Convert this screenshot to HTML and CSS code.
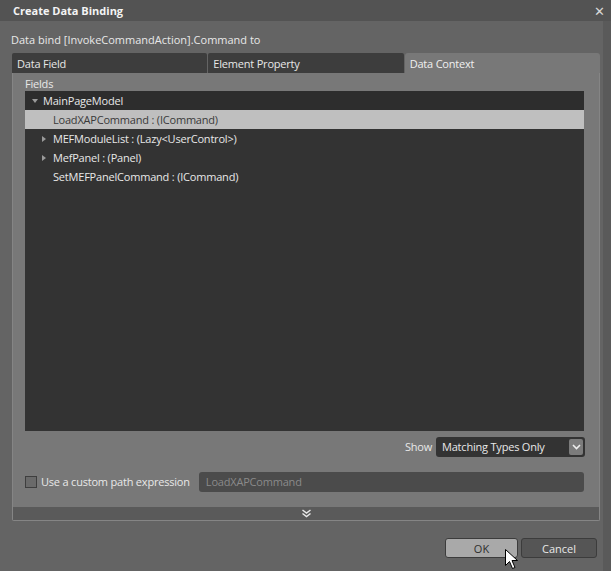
FILE: index.html
```html
<!DOCTYPE html>
<html lang="en">
<head>
    <meta charset="UTF-8">
    <title>Create Data Binding</title>
    <link rel="stylesheet" href="styles.css">
</head>
<body>
    <div class="window">
        <header class="titlebar">
            <span class="title">Create Data Binding</span>
            <span class="close">&#x2715;</span>
        </header>
        <div class="content">
            <p class="caption">Data bind [InvokeCommandAction].Command to</p>
            <div class="tabs">
                <div class="tab">Data Field</div>
                <div class="tab">Element Property</div>
                <div class="tab active">Data Context</div>
            </div>
            <div class="panel">
                <div class="panel-body">
                    <div class="fields-label">Fields</div>
                    <div class="tree">
                        <div class="row root"><span class="arrow down"></span>MainPageModel</div>
                        <div class="row child selected"><span class="arrow none"></span>LoadXAPCommand : (ICommand)</div>
                        <div class="row child"><span class="arrow right"></span>MEFModuleList : (Lazy&lt;UserControl&gt;)</div>
                        <div class="row child"><span class="arrow right"></span>MefPanel : (Panel)</div>
                        <div class="row child"><span class="arrow none"></span>SetMEFPanelCommand : (ICommand)</div>
                    </div>
                    <div class="show-row">
                        <span class="show-label">Show</span>
                        <div class="select">
                            <span>Matching Types Only</span>
                            <span class="select-btn">
                                <svg width="9" height="6" viewBox="0 0 9 6"><path d="M1 1 L4.5 4.5 L8 1" fill="none" stroke="#eee" stroke-width="1.6"/></svg>
                            </span>
                        </div>
                    </div>
                    <div class="path-row">
                        <span class="checkbox"></span>
                        <span class="path-label">Use a custom path expression</span>
                        <div class="path-input">LoadXAPCommand</div>
                    </div>
                </div>
                <div class="expander">
                    <svg width="11" height="9" viewBox="0 0 11 9"><path d="M1.5 1 L5.5 4 L9.5 1 M1.5 4.5 L5.5 7.5 L9.5 4.5" fill="none" stroke="#e8e8e8" stroke-width="1.5"/></svg>
                </div>
            </div>
            <div class="buttons">
                <button class="btn ok">OK</button>
                <button class="btn cancel">Cancel</button>
                <svg class="cursor" width="13" height="21" viewBox="0 0 13 21"><path d="M0.5 0.5 L0.5 16.5 L4.5 12.5 L7.5 19.5 L10 18.5 L7 11.5 L12.5 11.5 Z" fill="#fff" stroke="#000" stroke-width="1"/></svg>
            </div>
        </div>
    </div>
</body>
</html>
```

FILE: styles.css
```css
* {
    box-sizing: border-box;
    margin: 0;
    padding: 0;
}

body {
    font-family: "Open Sans", "Noto Sans", sans-serif;
    font-size: 11px;
    letter-spacing: -0.2px;
    background-color: #646464;
    color: #e8e8e8;
    width: 611px;
    height: 571px;
    overflow: hidden;
}

.window {
    height: 571px;
}

.titlebar {
    height: 21px;
    background-color: #535353;
    display: flex;
    align-items: center;
    justify-content: space-between;
    padding: 0 6px 0 13px;
}

.title {
    font-weight: bold;
    font-size: 11px;
    letter-spacing: 0;
    color: #f4f4f4;
}

.close {
    font-size: 13px;
    color: #d8d8d8;
}

.content {
    padding: 11px 3px 0 12px;
    height: 550px;
    border-right: 8px solid #5a5a5a;
}

.caption {
    height: 21px;
    margin-left: -1px;
    line-height: 16px;
    letter-spacing: 0;
}

.tabs {
    display: flex;
    gap: 1px;
    height: 20px;
}

.tab {
    flex: 1;
    background-color: #3d3d3d;
    padding: 0 5px;
    line-height: 21px;
    border-radius: 2px 2px 0 0;
}

.tab.active {
    background-color: #787878;
    color: #f0f0f0;
    border-radius: 3px 3px 0 0;
}

.panel {
    background-color: #787878;
    border: 1px solid #858585;
    border-top: none;
    border-radius: 0 0 2px 2px;
    height: 448px;
    display: flex;
    flex-direction: column;
}

.panel-body {
    flex: 1;
    padding: 3px 15px 0 12px;
}

.fields-label {
    height: 15px;
    line-height: 15px;
}

.tree {
    background-color: #333333;
    height: 340px;
}

.row {
    height: 19px;
    line-height: 19px;
    display: flex;
    align-items: center;
    white-space: nowrap;
}

.row.root {
    background-color: #2d2d2d;
    padding-left: 6px;
}

.row.child {
    padding-left: 16px;
}

.row.selected {
    background-color: #bfbfbf;
    color: #3a3a3a;
}

.arrow {
    width: 12px;
    flex: none;
    display: inline-block;
}

.arrow.down::before {
    content: "";
    display: block;
    border-left: 3px solid transparent;
    border-right: 3px solid transparent;
    border-top: 4px solid #9a9a9a;
    width: 0;
    margin-left: 1px;
}

.arrow.right::before {
    content: "";
    display: block;
    border-top: 3px solid transparent;
    border-bottom: 3px solid transparent;
    border-left: 4px solid #9a9a9a;
    width: 0;
    margin-left: 1px;
}

.show-row {
    display: flex;
    justify-content: flex-end;
    align-items: center;
    margin-top: 5px;
    margin-right: -1px;
    gap: 4px;
    height: 21px;
}

.select {
    width: 149px;
    height: 20px;
    background-color: #333333;
    border-radius: 3px;
    display: flex;
    align-items: center;
    justify-content: space-between;
    padding: 0 2px 0 6px;
}

.select-btn {
    width: 14px;
    height: 16px;
    background-color: #7c7c7c;
    border-radius: 2px;
    display: flex;
    align-items: center;
    justify-content: center;
}

.path-row {
    display: flex;
    align-items: center;
    margin-top: 14px;
    height: 21px;
}

.checkbox {
    width: 12px;
    height: 12px;
    border: 1px solid #3e3e3e;
    background-color: #6a6a6a;
    margin-right: 4px;
    flex: none;
}

.path-label {
    margin-right: 9px;
    white-space: nowrap;
}

.path-input {
    flex: 1;
    height: 20px;
    background-color: #4b4b4b;
    border-radius: 3px;
    color: #8a8a8a;
    padding-left: 7px;
    line-height: 20px;
}

.expander {
    height: 13px;
    background-color: #5a5a5a;
    display: flex;
    align-items: center;
    justify-content: center;
}

.buttons {
    position: relative;
    display: flex;
    justify-content: flex-end;
    gap: 3px;
    margin-top: 17px;
    padding-right: 3px;
}

.btn {
    width: 73px;
    height: 20px;
    font-family: inherit;
    font-size: 11px;
    color: #e8e8e8;
    background-color: #555555;
    border: 1px solid #3c3c3c;
    border-radius: 3px;
}

.btn.cancel {
    width: 76px;
}

.btn.ok {
    background-color: #a9a9a9;
    color: #2e2e2e;
}

.cursor {
    position: absolute;
    left: 493px;
    top: 11px;
}
```
